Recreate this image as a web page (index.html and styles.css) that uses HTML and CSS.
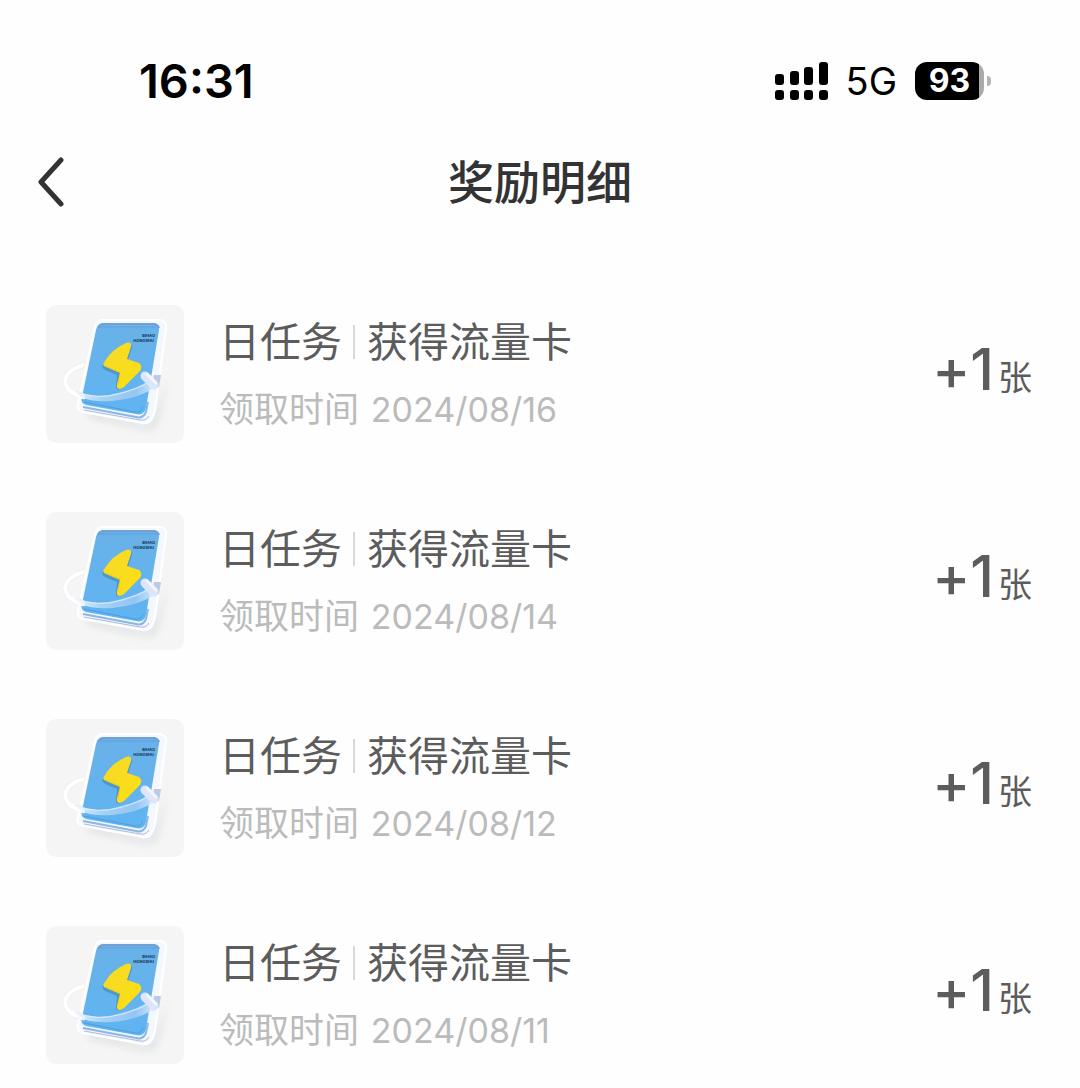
FILE: index.html
```html
<!DOCTYPE html>
<html lang="zh-CN">
<head>
<meta charset="UTF-8">
<meta name="viewport" content="width=device-width, initial-scale=1.0">
<title>奖励明细</title>
<link rel="stylesheet" href="styles.css">
</head>
<body>

<header class="status-bar">
  <time class="clock">16:31</time>
  <div class="status-icons">
    <svg class="signal" width="54" height="38" viewBox="0 0 54 38" role="img" aria-label="信号">
      <rect x="0" y="12" width="9" height="11" rx="3"/>
      <rect x="15" y="9" width="9" height="14" rx="3"/>
      <rect x="29" y="5" width="9" height="18" rx="3"/>
      <rect x="44" y="0" width="9" height="23" rx="3"/>
      <rect x="0" y="28" width="9" height="10" rx="3"/>
      <rect x="15" y="28" width="9" height="10" rx="3"/>
      <rect x="29" y="28" width="9" height="10" rx="3"/>
      <rect x="44" y="28" width="9" height="10" rx="3"/>
    </svg>
    <span class="network">5G</span>
    <div class="battery"><span class="level">93</span></div>
  </div>
</header>

<nav class="nav">
  <button class="back" aria-label="返回">
    <svg width="28" height="50" viewBox="0 0 28 50">
      <path d="M25 3 L5 25 L25 47" fill="none" stroke="#333" stroke-width="5" stroke-linecap="round" stroke-linejoin="round"/>
    </svg>
  </button>
  <h1 class="title">奖励明细</h1>
</nav>

<main>
  <ul class="rewards">
    <li class="reward">
      <svg class="thumb" viewBox="0 0 138 138">
        <defs>
          <linearGradient id="cover" x1="0" y1="0" x2="0" y2="1">
            <stop offset="0" stop-color="#69b1e8"/>
            <stop offset="1" stop-color="#5fb4f2"/>
          </linearGradient>
          <linearGradient id="ring" x1="0" y1="0" x2="1" y2="0">
            <stop offset="0" stop-color="#fff"/>
            <stop offset="0.35" stop-color="#b5d6f6"/>
            <stop offset="0.75" stop-color="#9bc9f3"/>
            <stop offset="1" stop-color="#e8eefb"/>
          </linearGradient>
          <linearGradient id="bolt" x1="0" y1="0" x2="1" y2="1">
            <stop offset="0" stop-color="#f5d92c"/>
            <stop offset="1" stop-color="#fde00f"/>
          </linearGradient>
          <filter id="soft" x="-20%" y="-20%" width="140%" height="140%">
            <feGaussianBlur stdDeviation="4"/>
          </filter>
        </defs>
        <g id="card">
          <path d="M40 104 L103 121 L122 74 L110 120 Q106 126 98 124 L44 112Z" fill="#d9dbde" filter="url(#soft)"/>
          <!-- clear case -->
          <path d="M56 15 H114 Q121 16 120 23 L109 105 Q106 119 97 118 L37 107 Q30 105 32 98 L49 22 Q51 15 56 15Z" fill="#f3f7fe" stroke="#fff" stroke-width="2"/>
          <path d="M38 105 L94 115 Q100 116 103 111" fill="none" stroke="#a9bbe0" stroke-width="1"/>
          <path d="M37 102 L90 112 Q97 114 100 107 L102 97" fill="none" stroke="#8eb6e3" stroke-width="2"/>
          <!-- cover -->
          <path d="M57 18 H108 Q114 19 113 25 L100 103 Q98 111 90 109 L40 100 Q34 98 36 92 L50 25 Q52 18 57 18Z" fill="url(#cover)"/>
          <path d="M52 23 Q54 19 59 19 H108 Q112 20 113 23" fill="none" stroke="#739fd5" stroke-width="2"/>
          <path d="M54 22 H110" stroke="#5aa4df" stroke-width="1"/>
          <path d="M38 97 L89 107 Q95 108 97 102" fill="none" stroke="#4b9fdf" stroke-width="1"/>
          <text x="109" y="32" text-anchor="end" class="card-label">BIHAO</text>
          <text x="108" y="37" text-anchor="end" class="card-label">HONGSHU</text>
          <!-- bolt -->
          <path d="M81 40 Q86 37 86 43 L82 55 L92 60 Q96 62 94 66 L76 83 Q70 87 70 81 L71 70 L59 65 Q54 62 58 58Z" fill="#3f86b0" opacity="0.6"/>
          <path d="M80 38 Q86 36 85 42 L81 54 L93 58 Q97 61 94 66 L78 82 Q70 87 71 79 L74 68 L60 62 Q55 60 59 56 Q66 44 80 38Z" fill="url(#bolt)"/>
          <path d="M59 61 L74 67 L72 80" fill="none" stroke="#d9ba22" stroke-width="1" opacity="0.5"/>
          <!-- ring -->
          <path d="M38 60 C22 64 16 74 21 82 Q25 90 39 92" fill="none" stroke="#e6e9ee" stroke-width="5"/>
          <path d="M38 60 C22 64 16 74 21 82 Q25 90 39 92" fill="none" stroke="#fff" stroke-width="4"/>
          <path d="M26 84 Q48 95 72 88 Q92 83 104 75 L110 82 Q92 94 66 96 Q34 98 26 84Z" fill="url(#ring)" opacity="0.85"/>
          <path d="M30 86 Q50 96 76 88 Q94 83 103 77" fill="none" stroke="#dcedff" stroke-width="1"/>
          <path d="M108 70 L115 70 L113 82 L106 84Z" fill="#bccae5"/>
          <path d="M99 71 L108 80" stroke="#dde5fa" stroke-width="9" stroke-linecap="round"/>
          <path d="M101 69 L110 78" stroke="#f5f7ff" stroke-width="3" stroke-linecap="round"/>
        </g>
      </svg>
      <div class="info">
        <div class="name"><span>日任务</span><i class="divider"></i><span>获得流量卡</span></div>
        <div class="date">领取时间 <time>2024/08/16</time></div>
      </div>
      <div class="amount">+1<span class="unit">张</span></div>
    </li>
    <li class="reward">
      <svg class="thumb" viewBox="0 0 138 138"><use href="#card"/></svg>
      <div class="info">
        <div class="name"><span>日任务</span><i class="divider"></i><span>获得流量卡</span></div>
        <div class="date">领取时间 <time>2024/08/14</time></div>
      </div>
      <div class="amount">+1<span class="unit">张</span></div>
    </li>
    <li class="reward">
      <svg class="thumb" viewBox="0 0 138 138"><use href="#card"/></svg>
      <div class="info">
        <div class="name"><span>日任务</span><i class="divider"></i><span>获得流量卡</span></div>
        <div class="date">领取时间 <time>2024/08/12</time></div>
      </div>
      <div class="amount">+1<span class="unit">张</span></div>
    </li>
    <li class="reward">
      <svg class="thumb" viewBox="0 0 138 138"><use href="#card"/></svg>
      <div class="info">
        <div class="name"><span>日任务</span><i class="divider"></i><span>获得流量卡</span></div>
        <div class="date">领取时间 <time>2024/08/11</time></div>
      </div>
      <div class="amount">+1<span class="unit">张</span></div>
    </li>
  </ul>
</main>

</body>
</html>
```
FILE: styles.css
```css
* {
  box-sizing: border-box;
}
body {
  margin: 0;
  background-color: #fefefe;
  color: #5c5c5c;
  font-family: Inter, "Noto Sans CJK SC", sans-serif;
}
.status-bar {
  display: flex;
  justify-content: space-between;
  align-items: center;
  padding: 53px 89px 0 139px;
  color: #000;
}
.clock {
  font-size: 47px;
  font-weight: 600;
  line-height: 56px;
}
.status-icons {
  display: flex;
  align-items: center;
}
.network {
  margin: 0 18px 0 17px;
  font-size: 38px;
  line-height: 56px;
}
.battery {
  display: flex;
  align-items: center;
  gap: 3px;
}
.level {
  width: 69px;
  border-radius: 12px;
  background: linear-gradient(to right, #000 64px, #aaa 64px);
  color: #fff;
  font-size: 32px;
  font-weight: 700;
  line-height: 38px;
  text-align: center;
}
.battery::after {
  content: "";
  width: 4px;
  height: 10px;
  border-radius: 0 4px 4px 0;
  background-color: #b5b5b5;
}
.nav {
  display: grid;
  grid-template-columns: 1fr auto 1fr;
  align-items: center;
  padding: 38px 36px 0;
}
.back {
  justify-self: start;
  display: flex;
  padding: 0;
  border: none;
  background: none;
  cursor: pointer;
}
.title {
  margin: 0;
  color: #333;
  font-size: 46px;
  font-weight: 500;
  line-height: 70px;
}
.rewards {
  display: flex;
  flex-direction: column;
  gap: 69px;
  margin: 0;
  padding: 88px 48px 23px 46px;
  list-style: none;
}
.reward {
  display: flex;
  align-items: center;
}
.thumb {
  flex: none;
  width: 138px;
  height: 138px;
  margin-right: 35px;
  border-radius: 10px;
  background-color: #f5f5f5;
}
.card-label {
  fill: #1d4163;
  font-size: 4px;
  font-weight: 800;
}
.info {
  flex: 1;
}
.name {
  display: flex;
  align-items: center;
  font-size: 41px;
  line-height: 58px;
}
.divider {
  width: 2px;
  height: 34px;
  margin: 0 12px 0 11px;
  background-color: #d8d8d8;
}
.date {
  margin-top: 12px;
  color: #bbb;
  font-size: 35px;
  line-height: 52px;
}
.date time {
  margin-left: 2px;
  font-size: 34px;
  font-variant-ligatures: no-contextual;
}
.amount {
  font-size: 57px;
  font-weight: 500;
  line-height: 70px;
  white-space: nowrap;
  font-variant-ligatures: no-contextual;
}
.unit {
  margin-left: 4px;
  font-size: 34px;
  font-weight: 400;
}
```
